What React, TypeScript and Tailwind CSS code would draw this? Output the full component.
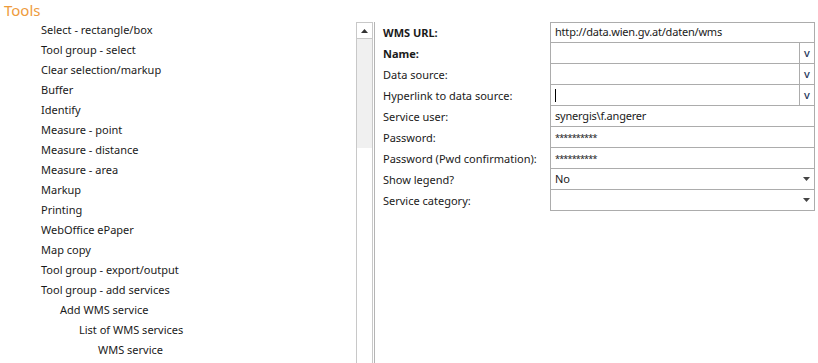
import React from "react"

const tools: { label: string; level: number }[] = [
  { label: "Select - rectangle/box", level: 0 },
  { label: "Tool group - select", level: 0 },
  { label: "Clear selection/markup", level: 0 },
  { label: "Buffer", level: 0 },
  { label: "Identify", level: 0 },
  { label: "Measure - point", level: 0 },
  { label: "Measure - distance", level: 0 },
  { label: "Measure - area", level: 0 },
  { label: "Markup", level: 0 },
  { label: "Printing", level: 0 },
  { label: "WebOffice ePaper", level: 0 },
  { label: "Map copy", level: 0 },
  { label: "Tool group - export/output", level: 0 },
  { label: "Tool group - add services", level: 0 },
  { label: "Add WMS service", level: 1 },
  { label: "List of WMS services", level: 2 },
  { label: "WMS service", level: 3 },
]

const indent = ["pl-[41px]", "pl-[60px]", "pl-[79px]", "pl-[98px]"]

type Field = {
  label: string
  bold?: boolean
  value?: string
  kind: "text" | "combo" | "select" | "cursor"
}

const fields: Field[] = [
  { label: "WMS URL:", bold: true, value: "http://data.wien.gv.at/daten/wms", kind: "text" },
  { label: "Name:", bold: true, kind: "combo" },
  { label: "Data source:", kind: "combo" },
  { label: "Hyperlink to data source:", kind: "cursor" },
  { label: "Service user:", value: "synergis\\f.angerer", kind: "text" },
  { label: "Password:", value: "**********", kind: "text" },
  { label: "Password (Pwd confirmation):", value: "**********", kind: "text" },
  { label: "Show legend?", value: "No", kind: "select" },
  { label: "Service category:", kind: "select" },
]

function Caret() {
  return (
    <svg width="7" height="4" viewBox="0 0 7 4" className="block">
      <path d="M0 0h7L3.5 4z" fill="#444" />
    </svg>
  )
}

function FieldBox({ f, first }: { f: Field; first: boolean }) {
  const border = first ? "border" : "border border-t-0"
  const masked = f.value?.startsWith("*")
  return (
    <div className={`h-[21px] flex items-center border-[#acacac] ${border}`}>
      <div className="flex-1 min-w-0 pl-[4px] flex items-center h-full whitespace-nowrap">
        {f.kind === "cursor" ? (
          <span className="block w-px h-[13px] bg-black" />
        ) : (
          <span className={masked ? "text-[9px] tracking-[-0.8px] leading-none" : "tracking-[-0.2px]"}>{f.value}</span>
        )}
      </div>
      {(f.kind === "combo" || f.kind === "cursor") && (
        <div className="w-[15px] h-full border-l border-[#acacac] flex items-center justify-center text-[11px] font-medium text-[#26365a]">
          v
        </div>
      )}
      {f.kind === "select" && (
        <div className="w-[15px] h-full flex items-center justify-center">
          <Caret />
        </div>
      )}
    </div>
  )
}

export default function App() {
  return (
    <div
      className="w-[818px] h-[363px] bg-white overflow-hidden text-[11px] text-[#1a1a1a]"
      style={{ fontFamily: '"Segoe UI", "Noto Sans", sans-serif' }}
    >
      <div className="h-[22px] pl-[4px] text-[15px] leading-[21px] text-[#ee9b3c]">Tools</div>
      <div className="flex h-[341px]">
        {/* tree */}
        <div className="w-[356px] -mt-[2px]">
          {tools.map((t) => (
            <div key={t.label} className={`h-[20px] leading-[20px] whitespace-nowrap ${indent[t.level]}`}>
              {t.label}
            </div>
          ))}
        </div>

        {/* scrollbar */}
        <div className="w-[17px] flex flex-col border-x border-[#c8c8c8]">
          <div className="h-[17px] border-b border-t border-[#c8c8c8] flex items-center justify-center bg-white">
            <svg width="7" height="4" viewBox="0 0 7 4" className="block">
              <path d="M0 4h7L3.5 0z" fill="#333" />
            </svg>
          </div>
          <div className="h-[109px] bg-[#f0f0f0]" />
          <div className="flex-1 bg-white" />
        </div>

        {/* properties */}
        <div className="ml-[1px] flex-1 border-l border-[#b4b4b4] flex pl-[8px] pr-[3px]">
          <div className="w-[167px]">
            {fields.map((f) => (
              <div key={f.label} className={`h-[21px] leading-[21px] whitespace-nowrap ${f.bold ? "font-bold" : ""}`}>
                {f.label}
              </div>
            ))}
          </div>
          <div className="flex-1">
            {fields.map((f, i) => (
              <FieldBox key={f.label} f={f} first={i === 0} />
            ))}
          </div>
        </div>
      </div>
    </div>
  )
}
